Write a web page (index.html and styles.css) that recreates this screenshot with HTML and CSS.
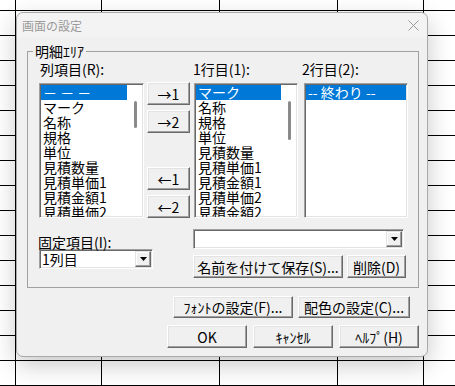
FILE: index.html
```html
<!DOCTYPE html>
<html lang="ja">
<head>
  <meta charset="UTF-8">
  <title>画面の設定</title>
  <link rel="stylesheet" href="styles.css">
</head>
<body>
  <div class="sheet">
    <div class="col c0"></div>
    <div class="col c1"></div>
    <div class="col c2"></div>
    <div class="col c3"></div>
    <div class="col c4"></div>
    <div class="col c5"></div>
  </div>

  <div class="dialog">
    <div class="titlebar">
      <span class="title">画面の設定</span>
      <svg class="close" width="11" height="11" viewBox="0 0 11 11">
        <path d="M0.5 0.5L10.5 10.5M10.5 0.5L0.5 10.5" stroke="#9a9a9a" stroke-width="1"/>
      </svg>
    </div>

    <div class="dlg-body">
      <fieldset class="group">
        <legend>明細ｴﾘｱ</legend>

        <div class="lists">
          <div class="lcol w1">
            <div class="lbl l1">列項目(R):</div>
            <div class="listbox">
              <div class="items">
                <div class="sel">－ － －</div>
                <div>マーク</div>
                <div>名称</div>
                <div>規格</div>
                <div>単位</div>
                <div>見積数量</div>
                <div>見積単価1</div>
                <div>見積金額1</div>
                <div>見積単価2</div>
              </div>
              <div class="scroll"><div class="thumb t1"></div></div>
            </div>
          </div>

          <div class="lcol wb">
            <div class="lbl"></div>
            <div class="movebtns">
              <div class="pair">
                <button class="btn">→1</button>
                <button class="btn">→2</button>
              </div>
              <div class="pair">
                <button class="btn">←1</button>
                <button class="btn">←2</button>
              </div>
            </div>
          </div>

          <div class="lcol w2">
            <div class="lbl l2">1行目(1):</div>
            <div class="listbox">
              <div class="items">
                <div class="sel">マーク</div>
                <div>名称</div>
                <div>規格</div>
                <div>単位</div>
                <div>見積数量</div>
                <div>見積単価1</div>
                <div>見積金額1</div>
                <div>見積単価2</div>
                <div>見積金額2</div>
              </div>
              <div class="scroll"><div class="thumb t2"></div></div>
            </div>
          </div>

          <div class="lcol w3">
            <div class="lbl l3">2行目(2):</div>
            <div class="listbox">
              <div class="items">
                <div class="sel">-- 終わり --</div>
              </div>
            </div>
          </div>
        </div>

        <div class="fixed-row">
          <div class="fixed">
            <div class="lbl-small">固定項目(I):</div>
            <div class="combo">
              <span class="val">1列目</span>
              <span class="drop"><svg width="7" height="4" viewBox="0 0 7 4"><path d="M0 0h7L3.5 4z" fill="#000"/></svg></span>
            </div>
          </div>
          <div class="preset">
            <div class="combo">
              <span class="val"></span>
              <span class="drop"><svg width="7" height="4" viewBox="0 0 7 4"><path d="M0 0h7L3.5 4z" fill="#000"/></svg></span>
            </div>
            <div class="preset-btns">
              <button class="btn save">名前を付けて保存(S)...</button>
              <button class="btn del">削除(D)</button>
            </div>
          </div>
        </div>
      </fieldset>

      <div class="actions">
        <button class="btn font">ﾌｫﾝﾄの設定(F)...</button>
        <button class="btn color">配色の設定(C)...</button>
      </div>
      <div class="actions main">
        <button class="btn ok">OK</button>
        <button class="btn ok">ｷｬﾝｾﾙ</button>
        <button class="btn ok">ﾍﾙﾌﾟ(H)</button>
      </div>
    </div>
  </div>
</body>
</html>
```

FILE: styles.css
```css
body {
  margin: 0;
  font-family: "Noto Sans CJK JP", "Liberation Sans", sans-serif;
  background: #fff;
  color: #000;
  overflow: hidden;
}

/* sheet behind the dialog */
.sheet {
  display: flex;
  width: 455px;
  height: 386px;
  background-image: linear-gradient(#000 0 1px, transparent 1px);
  background-size: 100% 25px;
  background-position: 0 10px;
}

.sheet .col {
  box-sizing: border-box;
  height: 100%;
  border-right: 1px solid #000;
}

.c0 { width: 16px; }
.c1 { width: 86px; }
.c2, .c3 { width: 118px; }
.c4 { width: 86px; }
.c5 { flex: 1; border-right: none !important; }

/* dialog window */
.dialog {
  position: absolute;
  left: 16px;
  top: 12px;
  width: 412px;
  height: 345px;
  box-sizing: border-box;
  background: #f0f0f0;
  border: 1px solid #a9a9a9;
  border-radius: 7px;
  box-shadow: 0 8px 24px rgba(0, 0, 0, 0.22);
}

.titlebar {
  height: 24px;
  display: flex;
  align-items: center;
  justify-content: space-between;
  padding: 0 8px 0 5px;
  background: #f3f3f3;
  border-radius: 7px 7px 0 0;
}

.title {
  font-size: 12px;
  color: #9a9a9a;
}

.dlg-body {
  padding: 6px 0 0 10px;
}

.group {
  margin: 0;
  width: 392px;
  box-sizing: border-box;
  padding: 2px 9px 9px 11px;
  border: 1px solid #a0a0a0;
}

.group legend {
  padding: 0 2px;
  margin-left: -6px;
  font-size: 14px;
  line-height: 16px;
}

/* list area */
.lists {
  display: flex;
}

.lcol {
  display: flex;
  flex-direction: column;
}

.w1 { width: 105px; }
.wb { width: 43px; margin-left: 3px; }
.w2 { width: 104px; margin-left: 4px; }
.w3 { width: 104px; margin-left: 6px; }

.lbl {
  height: 16px;
  line-height: 16px;
  font-size: 14px;
  margin-bottom: 6px;
  white-space: nowrap;
}

.l1 { margin-left: 1px; }
.l2 { margin-left: -1px; }
.l3 { margin-left: -2px; }

.listbox {
  height: 135px;
  box-sizing: border-box;
  display: flex;
  padding: 1px;
  background: #fff;
  border: 1px solid;
  border-color: #a0a0a0 #fff #fff #a0a0a0;
  box-shadow: inset 1px 1px #696969, inset -1px -1px #e3e3e3;
  overflow: hidden;
}

.items {
  flex: 1;
  font-size: 14px;
  line-height: 15px;
}

.items div {
  height: 15px;
  padding-left: 2px;
  white-space: nowrap;
}

.items .sel {
  background: #0078d7;
  color: #fff;
}

.scroll {
  width: 15px;
}

.thumb {
  width: 3px;
  margin: 16px 0 0 7px;
  background: #8a8a8a;
  border-radius: 2px;
}

.t1 { height: 27px; }
.t2 { height: 39px; }

.movebtns {
  height: 136px;
  margin-top: -1px;
  display: flex;
  flex-direction: column;
  justify-content: space-between;
}

.pair {
  display: flex;
  flex-direction: column;
  gap: 5px;
}

/* buttons */
.btn {
  height: 23px;
  padding: 0;
  box-sizing: border-box;
  font-family: "Noto Sans CJK JP", "Liberation Sans", sans-serif;
  font-size: 14px;
  line-height: 1;
  color: #000;
  background: #f0f0f0;
  border: 1px solid;
  border-color: #fff #696969 #696969 #fff;
  box-shadow: inset -1px -1px #a0a0a0, inset 1px 1px #e3e3e3;
  white-space: nowrap;
}

.movebtns .btn {
  width: 43px;
}

/* fixed columns + saved layouts */
.fixed-row {
  display: flex;
  align-items: flex-start;
}

.fixed {
  width: 114px;
  margin-top: 17px;
}

.lbl-small {
  font-size: 14px;
  line-height: 14px;
  height: 14px;
  margin-left: -1px;
  white-space: nowrap;
}

.combo {
  height: 20px;
  box-sizing: border-box;
  display: flex;
  align-items: center;
  padding: 1px;
  background: #fff;
  border: 1px solid;
  border-color: #a0a0a0 #fff #fff #a0a0a0;
  box-shadow: inset 1px 1px #696969, inset -1px -1px #e3e3e3;
}

.combo .val {
  flex: 1;
  font-size: 14px;
  line-height: 16px;
  padding-left: 1px;
}

.combo .drop {
  width: 16px;
  height: 16px;
  box-sizing: border-box;
  display: flex;
  align-items: center;
  justify-content: center;
  background: #f0f0f0;
  border: 1px solid;
  border-color: #e3e3e3 #696969 #696969 #e3e3e3;
  box-shadow: inset -1px -1px #a0a0a0, inset 1px 1px #fff;
}

.preset {
  width: 213px;
  margin: 11px 0 0 40px;
}

.preset .combo {
  width: 211px;
}

.preset-btns {
  display: flex;
  gap: 4px;
  margin-top: 6px;
}

.save { width: 150px; }
.del { width: 59px; }

/* bottom buttons */
.actions {
  display: flex;
  justify-content: flex-end;
  gap: 5px;
  margin-top: 8px;
  padding-right: 17px;
}

.actions .btn { height: 22px; }

.font { width: 120px; }
.color { width: 112px; }

.actions.main {
  gap: 6px;
  margin-top: 7px;
  padding-right: 8px;
}

.actions.main .btn {
  width: 80px;
  height: 23px;
}
```
